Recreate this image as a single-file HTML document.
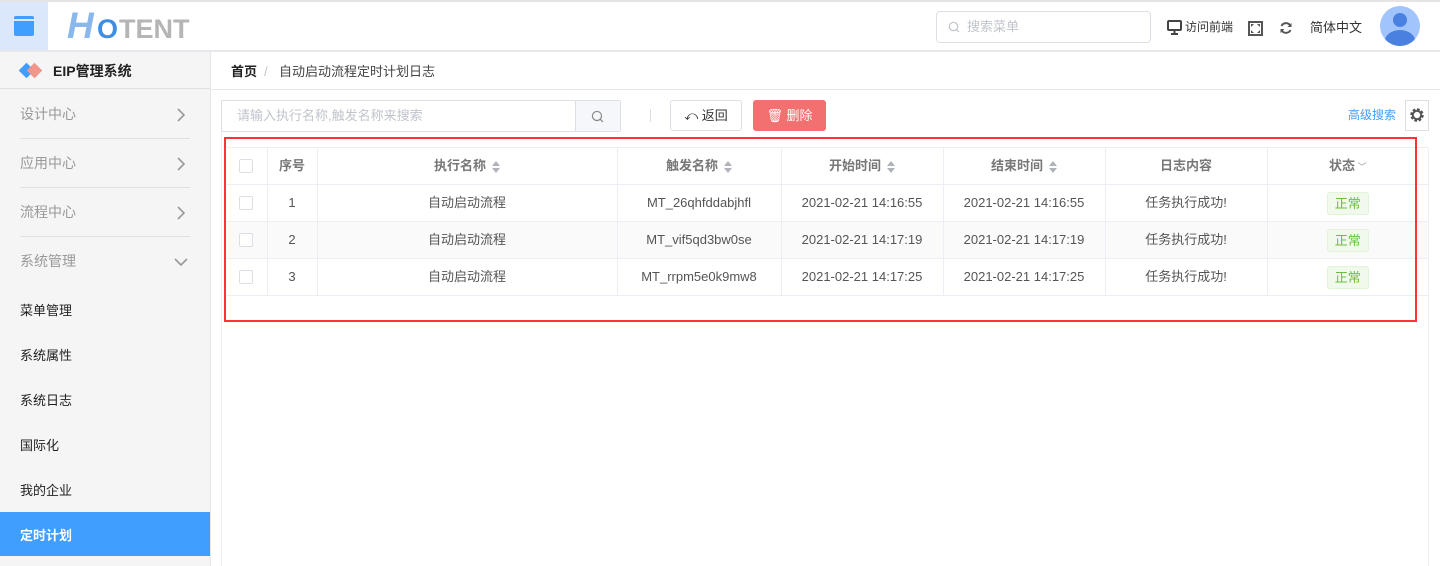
<!DOCTYPE html>
<html><head><meta charset="utf-8">
<style>
*{box-sizing:border-box;margin:0;padding:0}
body{width:1440px;height:566px;overflow:hidden;background:#fff;font-family:"Liberation Sans","Noto Sans CJK SC",sans-serif;font-size:13px;line-height:15px;color:#333;position:relative}
.abs{position:absolute}
.hdr{left:0;top:0;width:1440px;height:52px;border-top:2px solid #e4e4e4;border-bottom:2px solid #e6e8ee;background:#fff}
.side{left:0;top:52px;width:210px;height:514px;background:#f5f5f5}
.mi{position:absolute;left:20px;width:170px;height:49px;line-height:49px;color:#999;font-size:14px;border-bottom:1px solid #e0e0e0}
.mi svg{position:absolute;right:4px;top:18px}
.si{position:absolute;left:20px;font-size:13px;color:#222}
th,td{border-right:1px solid #ebeef5;border-bottom:1px solid #ebeef5;text-align:center;font-weight:normal;height:37px;padding:0;line-height:14px;vertical-align:middle}
th{color:#777;font-weight:bold;font-size:13px}
td{color:#555}
table{border-collapse:collapse;table-layout:fixed}
.cb{display:inline-block;width:14px;height:14px;border:1px solid #dcdfe6;border-radius:2px;background:#fff;vertical-align:middle}
.tag{display:inline-block;width:42px;height:23px;line-height:21px;border:1px solid #e1f3d8;background:#f0f9eb;color:#67c23a;border-radius:3px;font-size:13px}
.sort{display:inline-block;vertical-align:middle;margin-left:6px;width:8px;height:12px;position:relative}
.sort:before{content:"";position:absolute;left:0;top:0;border:4px solid transparent;border-bottom:5px solid #b0b3b9;border-top:0}
.sort:after{content:"";position:absolute;left:0;bottom:0;border:4px solid transparent;border-top:5px solid #b0b3b9;border-bottom:0}
</style></head><body>
<div class="abs hdr">
  <div class="abs" style="left:0;top:0;width:48px;height:48px;background:#dbe8fb"></div>
  <div class="abs" style="left:14px;top:14px;width:20px;height:20px;background:#409eff;border-radius:2px"><div style="margin-top:3px;height:2px;background:#dbe8fb"></div></div>
  <div class="abs" style="left:67px;top:6px;font-size:37px;line-height:36px;font-weight:bold;color:#8ab8ec;font-style:italic;letter-spacing:-4px">H</div>
  <div class="abs" style="left:97px;top:12px;font-size:27px;line-height:30px;font-weight:bold;color:#3b8fe6">O</div>
  <div class="abs" style="left:119px;top:12px;font-size:27px;line-height:30px;font-weight:bold;color:#b5b5b5;letter-spacing:0px">TENT</div>
  <div class="abs" style="left:936px;top:9px;width:215px;height:32px;border:1px solid #dcdfe6;border-radius:4px"></div>
  <svg class="abs" style="left:948px;top:19px" width="12" height="12" viewBox="0 0 12 12"><circle cx="5.5" cy="5.5" r="4.2" fill="none" stroke="#c0c4cc" stroke-width="1.2"/><path d="M8.5 8.5L11 11" stroke="#c0c4cc" stroke-width="1.2"/></svg>
  <div class="abs" style="left:967px;top:17px;color:#c0c4cc;font-size:13px">搜索菜单</div>
  <svg class="abs" style="left:1167px;top:18px" width="15" height="15" viewBox="0 0 15 15"><rect x="1" y="1" width="13" height="9" rx="1" fill="none" stroke="#444" stroke-width="2"/><path d="M7.5 10v3M4 14h7" stroke="#444" stroke-width="2"/></svg>
  <div class="abs" style="left:1185px;top:18px;font-size:12px;color:#333">访问前端</div>
  <svg class="abs" style="left:1248px;top:19px" width="15" height="15" viewBox="0 0 15 15"><rect x="1" y="1" width="13" height="13" fill="none" stroke="#555" stroke-width="2"/><path d="M3 3h3L3 6zM12 3h-3l3 3zM3 12h3l-3-3zM12 12h-3l3-3z" fill="#555"/></svg>
  <svg class="abs" style="left:1279px;top:19px" width="14" height="14" viewBox="0 0 14 14"><path d="M11.5 5A5 5 0 0 0 2.5 5M2.5 9a5 5 0 0 0 9 0" fill="none" stroke="#555" stroke-width="2"/><path d="M12.5 2v4h-4zM1.5 12V8h4z" fill="#555"/></svg>
  <div class="abs" style="left:1310px;top:18px;font-size:13px;color:#333">简体中文</div>
  <div class="abs" style="left:1380px;top:4px;width:40px;height:40px;border-radius:50%;background:#a0c4fb;overflow:hidden">
    <div class="abs" style="left:13px;top:7px;width:14px;height:14px;border-radius:50%;background:#4a80e0"></div>
    <div class="abs" style="left:5px;top:24px;width:30px;height:22px;border-radius:50%;background:#4a80e0"></div>
  </div>
</div>
<div class="abs side">
  <div class="abs" style="left:0;top:0;width:210px;height:37px;border-bottom:1px solid #e0e0e0"></div>
  <div class="abs" style="left:21px;top:13px;width:11px;height:11px;background:#409eff;transform:rotate(45deg)"></div>
  <div class="abs" style="left:29px;top:13px;width:11px;height:11px;background:#f0968a;transform:rotate(45deg)"></div>
  <div class="abs" style="left:53px;top:12px;font-size:14px;font-weight:bold;color:#222">EIP管理系统</div>
  <div class="mi" style="top:38px">设计中心<svg width="9" height="14" viewBox="0 0 9 14"><path d="M1 1l6 6-6 6" fill="none" stroke="#999" stroke-width="1.6"/></svg></div>
  <div class="mi" style="top:87px">应用中心<svg width="9" height="14" viewBox="0 0 9 14"><path d="M1 1l6 6-6 6" fill="none" stroke="#999" stroke-width="1.6"/></svg></div>
  <div class="mi" style="top:136px">流程中心<svg width="9" height="14" viewBox="0 0 9 14"><path d="M1 1l6 6-6 6" fill="none" stroke="#999" stroke-width="1.6"/></svg></div>
  <div class="mi" style="top:185px;border:0">系统管理<svg width="14" height="9" viewBox="0 0 14 9" style="right:2px;top:21px"><path d="M1 1l6 6 6-6" fill="none" stroke="#999" stroke-width="1.6"/></svg></div>
  <div class="si" style="top:251px">菜单管理</div>
  <div class="si" style="top:296px">系统属性</div>
  <div class="si" style="top:341px">系统日志</div>
  <div class="si" style="top:386px">国际化</div>
  <div class="si" style="top:431px">我的企业</div>
  <div class="abs" style="left:0;top:460px;width:210px;height:44px;background:#409eff"></div>
  <div class="si" style="top:476px;color:#fff;font-weight:bold">定时计划</div>
</div>
<div class="abs" style="left:210px;top:52px;width:1px;height:514px;background:#e6e6e6"></div>
<div class="abs" style="left:211px;top:52px;width:1229px;height:38px;border-bottom:1px solid #e6e8ee"></div>
<div class="abs" style="left:231px;top:64px;font-weight:bold;color:#222">首页</div>
<div class="abs" style="left:264px;top:64px;color:#c0c4cc">/</div>
<div class="abs" style="left:279px;top:64px;color:#444">自动启动流程定时计划日志</div>
<div class="abs" style="left:221px;top:100px;width:1px;height:466px;background:#ebeef5"></div>
<div class="abs" style="left:1428px;top:148px;width:1px;height:418px;background:#ebeef5"></div>
<div class="abs" style="left:221px;top:100px;width:400px;height:32px;border:1px solid #dcdfe6;border-radius:2px"></div>
<div class="abs" style="left:575px;top:101px;width:45px;height:30px;background:#f5f7fa;border-left:1px solid #dcdfe6"></div>
<svg class="abs" style="left:591px;top:110px" width="13" height="13" viewBox="0 0 12 12"><circle cx="5.5" cy="5.5" r="4.2" fill="none" stroke="#888" stroke-width="1.1"/><path d="M8.5 8.5L11 11" stroke="#888" stroke-width="1.1"/></svg>
<div class="abs" style="left:237px;top:108px;color:#c0c4cc">请输入执行名称,触发名称来搜索</div>
<div class="abs" style="left:650px;top:109px;width:1px;height:13px;background:#ddd"></div>
<div class="abs" style="left:670px;top:100px;width:72px;height:31px;border:1px solid #dcdfe6;border-radius:3px;text-align:center;line-height:29px;color:#333">⤺ 返回</div>
<div class="abs" style="left:753px;top:100px;width:73px;height:31px;background:#f37070;border-radius:3px;text-align:center;line-height:31px;color:#fff">🗑 删除</div>
<div class="abs" style="left:1348px;top:108px;color:#409eff;font-size:12px">高级搜索</div>
<div class="abs" style="left:1405px;top:100px;width:24px;height:31px;border:1px solid #dcdfe6"></div>
<svg class="abs" style="left:1409px;top:107px" width="16" height="16" viewBox="0 0 16 16"><circle cx="8" cy="8" r="5" fill="none" stroke="#555" stroke-width="3.5" stroke-dasharray="2.4 1.5"/><circle cx="8" cy="8" r="4.2" fill="none" stroke="#555" stroke-width="2"/></svg>
<table class="abs" style="left:226px;top:147px;width:1202px;border-top:1px solid #ebeef5">
<colgroup><col style="width:41px"><col style="width:50px"><col style="width:300px"><col style="width:164px"><col style="width:162px"><col style="width:162px"><col style="width:162px"><col style="width:161px"></colgroup>
<tr><th><span class="cb"></span></th><th>序号</th><th>执行名称<span class="sort"></span></th><th>触发名称<span class="sort"></span></th><th>开始时间<span class="sort"></span></th><th>结束时间<span class="sort"></span></th><th>日志内容</th><th style="border-right:0">状态<span style="font-weight:normal;font-size:9px;color:#999"> ﹀</span></th></tr>
<tr><td><span class="cb"></span></td><td>1</td><td>自动启动流程</td><td>MT_26qhfddabjhfl</td><td>2021-02-21 14:16:55</td><td>2021-02-21 14:16:55</td><td>任务执行成功!</td><td style="border-right:0"><span class="tag">正常</span></td></tr>
<tr style="background:#fafafa"><td><span class="cb"></span></td><td>2</td><td>自动启动流程</td><td>MT_vif5qd3bw0se</td><td>2021-02-21 14:17:19</td><td>2021-02-21 14:17:19</td><td>任务执行成功!</td><td style="border-right:0"><span class="tag">正常</span></td></tr>
<tr><td><span class="cb"></span></td><td>3</td><td>自动启动流程</td><td>MT_rrpm5e0k9mw8</td><td>2021-02-21 14:17:25</td><td>2021-02-21 14:17:25</td><td>任务执行成功!</td><td style="border-right:0"><span class="tag">正常</span></td></tr>
</table>
<div class="abs" style="left:224px;top:137px;width:1193px;height:185px;border:2px solid #f33"></div>
</body></html>
